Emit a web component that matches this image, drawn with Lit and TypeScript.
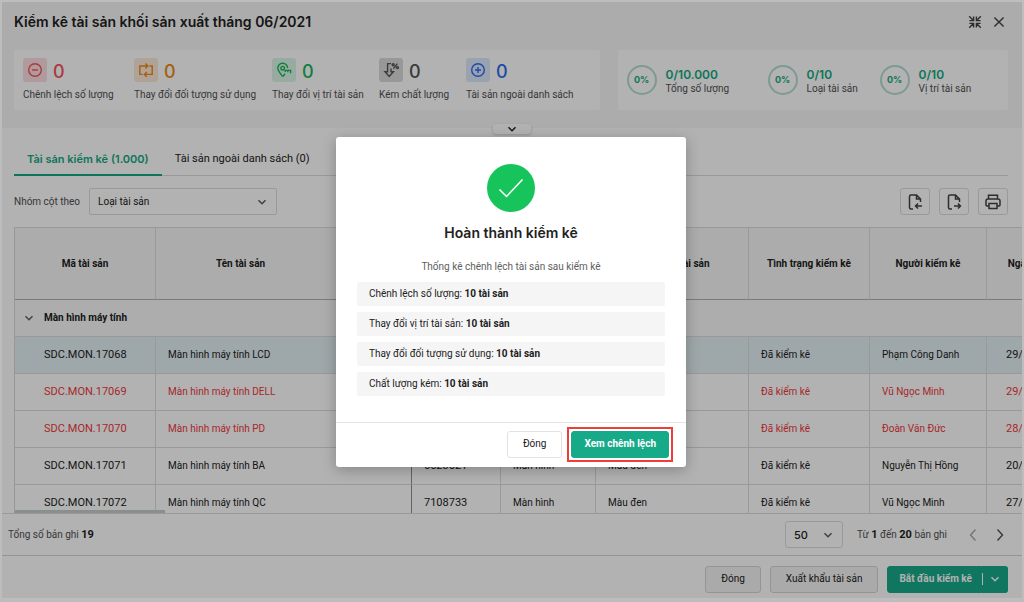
import { LitElement, html, css, svg } from "lit";
import { customElement, state } from "lit/decorators.js";
import { classMap } from "lit/directives/class-map.js";

const icons: Record<string, unknown> = {
  minus: svg`<circle cx="8" cy="8" r="6.3"/><path d="M5 8h6"/>`,
  plus: svg`<circle cx="8" cy="8" r="6.3"/><path d="M5 8h6M8 5v6"/>`,
  swap: svg`<path d="M4.600 12.400H1.800V4h7.400M7.400 1.600 9.800 4 7.400 6.400M11.400 4h2.800v8.400H6.800M8.800 10l-2.400 2.400 2.400 2.400"/>`,
  pin: svg`<path d="M6.800 14.600C4 11.400 1.800 8.800 1.800 6.300a4.900 4.900 0 0 1 9.800-.3M6.800 14.600 9 11.800"/><circle cx="6.700" cy="6.200" r="1.800"/><path d="M9 8.400h5.600v2.800M11.800 8.400v1.800M9.200 8.400v1.600"/>`,
  quality: svg`<path d="M8 1.600H4.600v8.200H2l4.200 4.600 4.200-4.600H8V6.500M8 1.600H5"/><path d="M10.400 6.600l4-5"/><circle cx="10.200" cy="2.800" r="1"/><circle cx="14.400" cy="5.600" r="1"/>`,
};

const chevron = () => html`<svg class="chev" viewBox="0 0 10 10" aria-hidden="true"><path d="M1.500 3.200 5 6.800l3.500-3.600"/></svg>`;

const stats = [
  { icon: "minus", tone: "red", label: "Chênh lệch số lượng" },
  { icon: "swap", tone: "orange", label: "Thay đổi đối tượng sử dụng" },
  { icon: "pin", tone: "green", label: "Thay đổi vị trí tài sản" },
  { icon: "quality", tone: "gray", label: "Kém chất lượng" },
  { icon: "plus", tone: "blue", label: "Tài sản ngoài danh sách" },
];

const progress = [
  { value: "0/10.000", label: "Tổng số lượng" },
  { value: "0/10", label: "Loại tài sản" },
  { value: "0/10", label: "Vị trí tài sản" },
];

const columns = ["Mã tài sản", "Tên tài sản", "Số serial", "Loại", "Đặc điểm tài sản", "Tình trạng kiểm kê", "Người kiểm kê", "Ngày kiểm kê"];

const rows = [
  { code: "SDC.MON.17068", name: "Màn hình máy tính LCD", serial: "6523518", person: "Phạm Công Danh", date: "29/06/2021", selected: true },
  { code: "SDC.MON.17069", name: "Màn hình máy tính DELL", serial: "6523519", person: "Vũ Ngọc Minh", date: "29/06/2021", alert: true },
  { code: "SDC.MON.17070", name: "Màn hình máy tính PD", serial: "6523520", person: "Đoàn Văn Đức", date: "28/06/2021", alert: true },
  { code: "SDC.MON.17071", name: "Màn hình máy tính BA", serial: "6523521", person: "Nguyễn Thị Hồng", date: "20/06/2021" },
  { code: "SDC.MON.17072", name: "Màn hình máy tính QC", serial: "7108733", person: "Vũ Ngọc Minh", date: "27/06/2021" },
];

const summary = ["Chênh lệch số lượng", "Thay đổi vị trí tài sản", "Thay đổi đối tượng sử dụng", "Chất lượng kém"];

@customElement("app-root")
export class AppRoot extends LitElement {
  @state() private tab = 0;
  @state() private open = true;

  static styles = css`
    :host {
      display: block;
      position: relative;
      height: 100vh;
      overflow: hidden;
      box-sizing: border-box;
      padding: 2px 2px 4px;
      background: #bdbdbd;
      font: 10px/16px Roboto, Inter, "Liberation Sans", sans-serif;
      color: #212121;
    }
    *, *::before, *::after { box-sizing: border-box; }
    button, select { font: inherit; color: inherit; cursor: pointer; }
    svg { fill: none; stroke: currentColor; stroke-width: 1.4; display: block; }
    h1, h2, p, ul { margin: 0; padding: 0; }

    .shell { height: 100%; display: flex; flex-direction: column; background: #fff; }
    .head { position: relative; background: #f6f6f6; padding: 8px 14px 18px 12px; flex: none; }
    .title-bar { display: flex; align-items: center; height: 24px; margin-right: -3px; color: #212121; }
    .title-bar h1 { flex: 1; font-family: Inter, sans-serif; font-size: 14px; line-height: 24px; font-weight: 600; }
    .tool { border: 0; background: none; padding: 0; width: 24px; height: 24px; display: grid; place-items: center; color: #424242; }
    .tool svg { width: 14px; height: 14px; stroke-width: 1.4; }
    .cards { display: grid; grid-template-columns: 3fr 2fr; gap: 18px; margin-top: 16px; }
    .card { background: #fff; border-radius: 3px; height: 60px; display: grid; color: #505050; }
    .stats { padding: 8px 0 7px 9px; grid-template-columns: 111px 138px 107px 87px auto; }
    .progress { padding: 0 0 0 9px; grid-template-columns: 141px 112px auto; align-items: center; }
    .stat { display: flex; flex-direction: column; justify-content: space-between; white-space: nowrap; }
    .stat-top { display: flex; align-items: center; gap: 6px; font-family: Inter, sans-serif; font-size: 18px; line-height: 20px; font-weight: 500; }
    .stat-value { padding-top: 3px; }
    .badge { width: 24px; height: 24px; border-radius: 3px; display: grid; place-items: center; }
    .badge svg { width: 16px; height: 16px; }
    .red .stat-top { color: #f5535c; }
    .red .badge { background: #fbdfe1; }
    .orange .stat-top { color: #ee8a14; }
    .orange .badge { background: #fbe9d8; }
    .green .stat-top { color: #14b85a; }
    .green .badge { background: #dcf5e5; }
    .gray .stat-top { color: #555; }
    .gray .badge { background: #dadada; }
    .blue .stat-top { color: #2c6cf2; }
    .blue .badge { background: #dde7fb; }
    .meter { display: flex; align-items: center; gap: 9px; white-space: nowrap; line-height: 14px; }
    .ring { width: 30px; height: 30px; border: 2px solid #b4ddd1; border-radius: 50%; display: grid; place-items: center; font: 700 9px/14px Inter, sans-serif; color: #14a881; }
    .meter-text { padding-top: 3px; }
    .meter strong { display: block; font-family: Inter, sans-serif; font-size: 12px; font-weight: 600; color: #14a881; }
    .collapse { position: absolute; left: 50%; bottom: -6px; width: 38px; height: 10px; margin-left: -19px; border: 0; padding: 0; border-radius: 3px; background: #fff; box-shadow: 0 1px 3px rgba(0, 0, 0, .2); display: grid; place-items: center; }
    .chev { width: 10px; height: 10px; }

    .body { flex: 1; min-height: 0; display: flex; flex-direction: column; padding-left: 12px; }
    .tabs { display: flex; margin-right: 14px; padding-top: 15px; border-bottom: 1px solid #dcdcdc; flex: none; }
    .tab { border: 0; border-bottom: 2px solid transparent; background: none; padding: 0 13px; height: 33px; line-height: 32px; font-size: 11px; white-space: nowrap; display: flex; align-items: flex-start; margin-bottom: -1px; }
    .tab.active { color: #14a881; font-family: Inter, sans-serif; font-weight: 600; border-bottom-color: #14a881; }
    .filter { display: flex; align-items: center; gap: 8px; margin: 12px 14px 12px 0; color: #505050; flex: none; }
    .filter label { display: flex; align-items: center; gap: 9px; flex: 1; }
    .pick { position: relative; display: inline-flex; align-items: center; color: #212121; }
    .pick select { appearance: none; border: 1px solid #dcdcdc; border-radius: 2px; background: #fff; height: 27px; width: 188px; padding: 0 8px; }
    .pick .chev { position: absolute; right: 10px; pointer-events: none; color: #505a64; }
    .icon-btn { width: 30px; height: 27px; border: 1px solid #dcdcdc; border-radius: 3px; background: #fff; padding: 0; display: grid; place-items: center; margin-left: 1px; color: #424242; }
    .icon-btn svg { width: 18px; height: 18px; stroke-width: 1.5; }

    .grid { position: relative; flex: 1; min-height: 0; overflow: hidden; border-left: 1px solid #d8d8d8; }
    table { width: 1075px; table-layout: fixed; border-collapse: separate; border-spacing: 0; }
    th, td { padding: 0 12px; border-right: 1px solid #dcdcdc; border-bottom: 1px solid #dcdcdc; white-space: nowrap; overflow: hidden; }
    thead th { height: 73px; background: #f6f6f6; border-top: 1px solid #dcdcdc; border-bottom-color: #b0b0b0; font-weight: 700; text-align: center; }
    thead th:nth-child(2) { padding-right: 98px; }
    tbody tr { height: 37px; }
    td:first-child { padding-left: 29px; }
    td:last-child { padding-left: 19px; }
    td:nth-child(2) { border-right-color: #909090; }
    td.code { font-size: 11px; }
    .selected td { background: #e3eff3; }
    .alert td { color: #f0383c; }
    .group th { background: #f8f8f8; text-align: left; font-weight: 700; padding: 0 9px; }
    .group-name { display: flex; align-items: center; gap: 10px; }
    .group-name .chev { color: #56606a; }
    .thumb { position: absolute; left: 0; bottom: 0; width: 150px; height: 3px; background: #c4cccc; }

    .pager { flex: none; height: 43px; border-top: 1px solid #dcdcdc; border-bottom: 1px solid #d4d4d4; display: flex; align-items: center; padding: 0 12px 0 6px; color: #505050; }
    .pager strong { color: #212121; font-weight: 700; font-size: 11px; }
    .count { flex: 1; }
    .pager .pick select { width: 58px; height: 27px; border-radius: 3px; font: 500 11px/16px Inter, sans-serif; }
    .range { margin: 0 16px 0 14px; }
    .page { border: 0; background: none; padding: 0; width: 20px; height: 20px; margin-left: 7px; display: grid; place-items: center; }
    .page:first-of-type { margin-left: 0; }
    .page svg { width: 14px; height: 14px; }
    .page:disabled { color: #a8a8a8; }
    .foot { flex: none; height: 42px; display: flex; align-items: center; justify-content: flex-end; gap: 9px; padding: 4px 14px 0 14px; }
    .btn { height: 27px; border: 1px solid #d4d4d4; border-radius: 3px; padding: 0 15px; background: #fff; white-space: nowrap; }
    .foot .btn { background: #f4f4f4; }
    .foot .primary, .btn.primary { background: #17aa88; border-color: #17aa88; color: #fff; font-weight: 700; }
    .split { display: flex; }
    .split .btn:first-child { border-radius: 3px 0 0 3px; padding: 0 9px 0 11px; }
    .split .btn:last-child { border-radius: 0 3px 3px 0; padding: 0 7px 0 0; display: flex; align-items: center; gap: 7px; border-left: 0; }
    .split .btn:last-child::before { content: ""; width: 1px; height: 12px; background: #fff; }

    .scrim { position: absolute; inset: 2px 2px 4px; background: rgba(0, 0, 0, .3); display: grid; place-items: center; padding: 3px 2px 0 0; }
    .dialog { width: 350px; background: #fff; border-radius: 3px; box-shadow: 0 3px 14px rgba(0, 0, 0, .25); }
    .dialog-body { padding: 27px 21px 26px; text-align: center; }
    .tick { width: 48px; height: 48px; margin: 0 auto; border-radius: 50%; background: #16c45b; color: #fff; display: grid; place-items: center; }
    .tick svg { width: 26px; height: 26px; stroke-width: 1.5; }
    .dialog h2 { margin-top: 11px; font-family: Inter, sans-serif; font-size: 14px; line-height: 20px; font-weight: 600; }
    .lead { margin: 15px 0 6px; line-height: 18px; color: #606060; }
    .lines { list-style: none; display: grid; gap: 6px; text-align: left; }
    .lines li { background: #f5f5f5; border-radius: 2px; padding: 4px 12px; line-height: 16px; }
    .lines strong { font-weight: 700; }
    .dialog-foot { border-top: 1px solid #e4e4e4; display: flex; justify-content: flex-end; align-items: center; gap: 5px; padding: 4px 13px 5px; }
    .focus { border: 2px solid #ef3e3a; padding: 2px; display: flex; }
    .dialog .primary { padding: 0 12px; }
    .dialog .plain { border-color: #e2e2e2; }
  `;

  private select(id: string, options: string[]) {
    return html`<span class="pick"><select id=${id} aria-label=${options[0]}>${options.map((o) => html`<option>${o}</option>`)}</select>${chevron()}</span>`;
  }

  render() {
    return html`
      <div class="shell">
        <header class="head">
          <div class="title-bar">
            <h1>Kiểm kê tài sản khối sản xuất tháng 06/2021</h1>
            <button class="tool" aria-label="Thu nhỏ">
              <svg viewBox="0 0 14 14"><path d="M1.200 1.200l4 4M5.600 1.400v4.200H1.400M12.800 1.200l-4 4M8.400 1.400v4.200h4.200M1.200 12.800l4-4M5.600 12.600V8.400H1.400M12.800 12.800l-4-4M8.400 12.600V8.400h4.200"/></svg>
            </button>
            <button class="tool" aria-label="Đóng cửa sổ">
              <svg viewBox="0 0 14 14"><path d="M2.400 2.400l9.200 9.200M11.600 2.400l-9.200 9.200"/></svg>
            </button>
          </div>
          <div class="cards">
            <section class="card stats">
              ${stats.map((s) => html`
                <div class="stat ${s.tone}">
                  <div class="stat-top"><span class="badge"><svg viewBox="0 0 16 16">${icons[s.icon]}</svg></span><span class="stat-value">0</span></div>
                  <span>${s.label}</span>
                </div>`)}
            </section>
            <section class="card progress">
              ${progress.map((p) => html`
                <div class="meter"><span class="ring">0%</span><span class="meter-text"><strong>${p.value}</strong>${p.label}</span></div>`)}
            </section>
          </div>
          <button class="collapse" aria-label="Thu gọn">${chevron()}</button>
        </header>

        <main class="body">
          <div class="tabs" role="tablist">
            ${["Tài sản kiểm kê (1.000)", "Tài sản ngoài danh sách (0)"].map((t, i) => html`
              <button role="tab" class=${classMap({ tab: true, active: this.tab === i })} @click=${() => (this.tab = i)}>${t}</button>`)}
          </div>
          <div class="filter">
            <label for="group">Nhóm cột theo ${this.select("group", ["Loại tài sản"])}</label>
            <button class="icon-btn" aria-label="Nhập"><svg viewBox="0 0 18 18"><path d="M7 16H5a1.500 1.500 0 0 1-1.500-1.500v-11A1.500 1.500 0 0 1 5 2h5.500L14.500 6v3M10.500 2v4h4M16 13H9.500M12 10.500 9.500 13l2.500 2.500"/></svg></button>
            <button class="icon-btn" aria-label="Xuất"><svg viewBox="0 0 18 18"><path d="M7 16H5a1.500 1.500 0 0 1-1.500-1.500v-11A1.500 1.500 0 0 1 5 2h5.500L14.500 6v3M10.500 2v4h4M9 13h6.500M13 10.500l2.500 2.500-2.500 2.500"/></svg></button>
            <button class="icon-btn" aria-label="In"><svg viewBox="0 0 18 18"><path d="M4.500 6V2.200h9V6M4.500 13H3a1 1 0 0 1-1-1V8a2 2 0 0 1 2-2h10a2 2 0 0 1 2 2v4a1 1 0 0 1-1 1h-1.500M5 10.500h8v5H5z"/></svg></button>
          </div>
          <div class="grid">
            <table>
              <colgroup><col width="141"><col width="256"><col width="89"><col width="95"><col width="153"><col width="121"><col width="117"><col width="103"></colgroup>
              <thead><tr>${columns.map((c) => html`<th scope="col">${c}</th>`)}</tr></thead>
              <tbody>
                <tr class="group"><th colspan="8" scope="rowgroup"><span class="group-name">${chevron()}Màn hình máy tính</span></th></tr>
                ${rows.map((r) => html`
                  <tr class=${classMap({ selected: !!r.selected, alert: !!r.alert })}>
                    <td class="code">${r.code}</td><td>${r.name}</td><td class="code">${r.serial}</td><td>Màn hình</td><td>Màu đen</td><td>Đã kiểm kê</td><td>${r.person}</td><td class="code">${r.date}</td>
                  </tr>`)}
              </tbody>
            </table>
            <div class="thumb"></div>
          </div>
        </main>

        <div class="pager">
          <span class="count">Tổng số bản ghi <strong>19</strong></span>
          ${this.select("size", ["50"])}
          <span class="range">Từ <strong>1</strong> đến <strong>20</strong> bản ghi</span>
          <button class="page" disabled aria-label="Trang trước"><svg viewBox="0 0 14 14"><path d="M9.500 1.500 4.500 7l5 5.500"/></svg></button>
          <button class="page" aria-label="Trang sau"><svg viewBox="0 0 14 14"><path d="M4.500 1.500l5 5.500-5 5.500"/></svg></button>
        </div>
        <footer class="foot">
          <button class="btn">Đóng</button>
          <button class="btn">Xuất khẩu tài sản</button>
          <div class="split"><button class="btn primary">Bắt đầu kiểm kê</button><button class="btn primary" aria-label="Thêm">${chevron()}</button></div>
        </footer>
      </div>
      ${this.open ? html`
        <div class="scrim">
          <div class="dialog" role="dialog" aria-modal="true" aria-labelledby="done">
            <div class="dialog-body">
              <div class="tick"><svg viewBox="0 0 26 26"><path d="M1.500 14.500 8.500 21.500 24.500 4.500"/></svg></div>
              <h2 id="done">Hoàn thành kiểm kê</h2>
              <p class="lead">Thống kê chênh lệch tài sản sau kiểm kê</p>
              <ul class="lines">${summary.map((s) => html`<li>${s}: <strong>10 tài sản</strong></li>`)}</ul>
            </div>
            <div class="dialog-foot">
              <button class="btn plain" @click=${() => (this.open = false)}>Đóng</button>
              <div class="focus"><button class="btn primary">Xem chênh lệch</button></div>
            </div>
          </div>
        </div>` : ""}
    `;
  }
}
